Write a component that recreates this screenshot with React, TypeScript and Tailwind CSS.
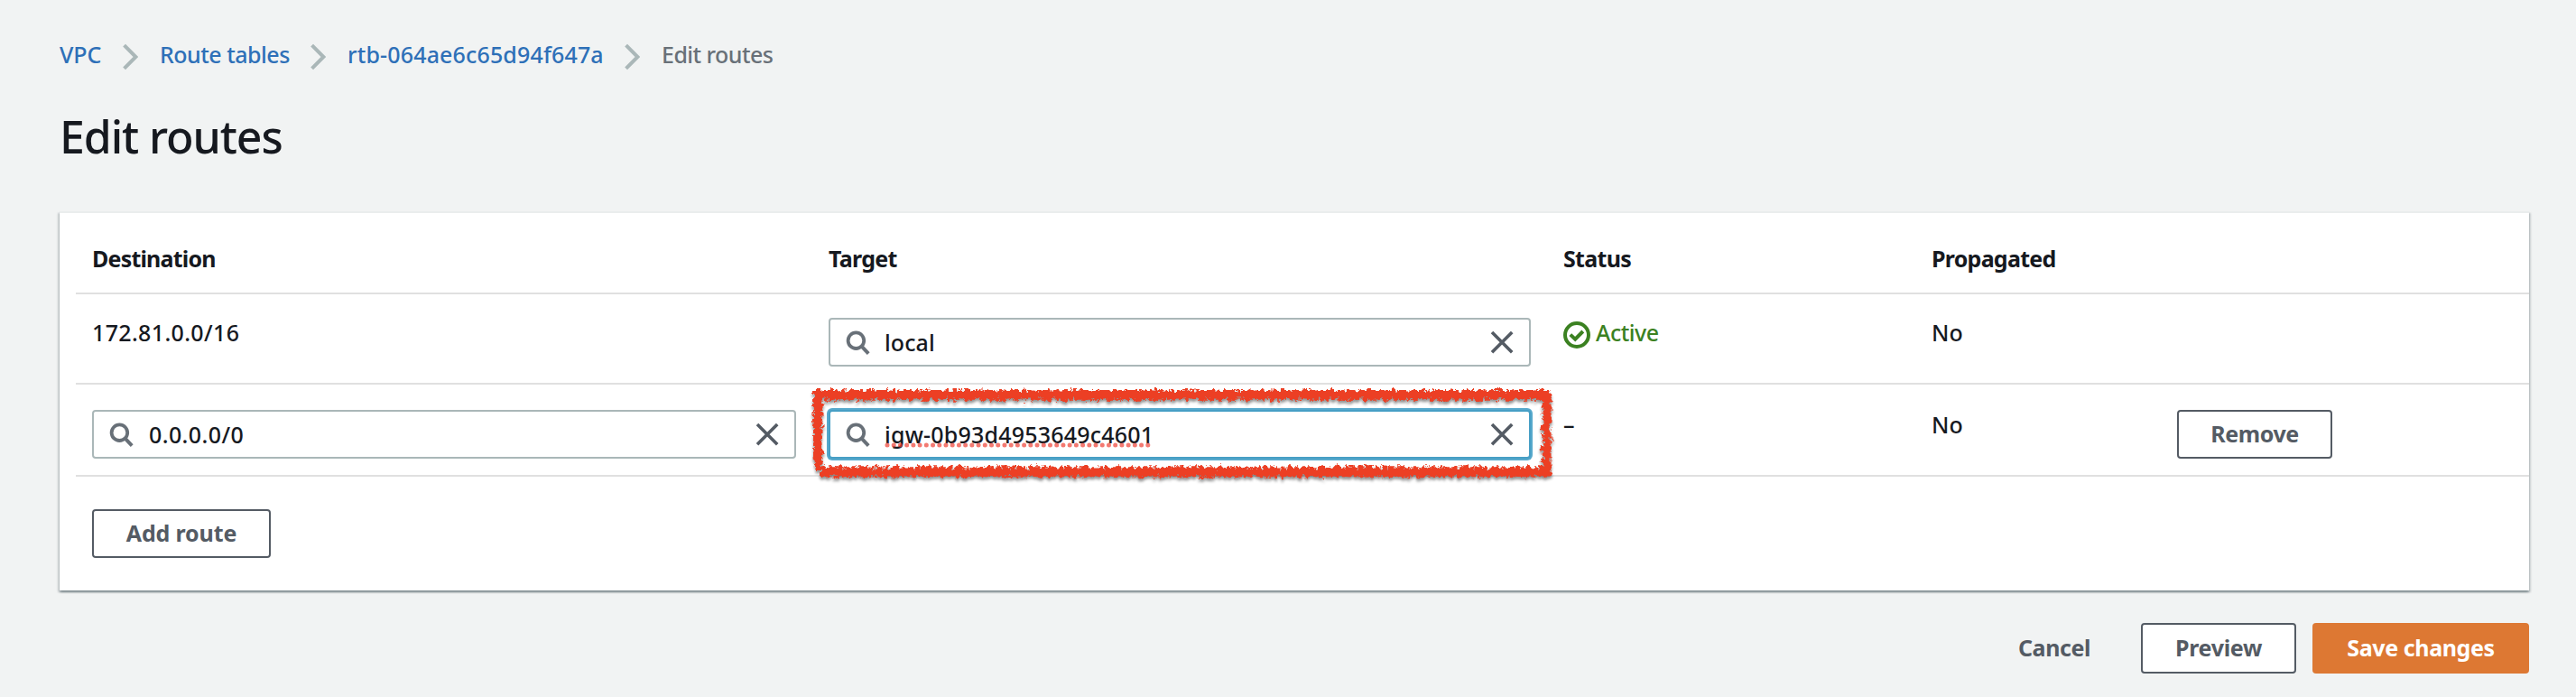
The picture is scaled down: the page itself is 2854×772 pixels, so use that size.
import type { ReactNode } from "react";

function Chevron() {
  return (
    <svg className="mt-2 h-[30px] w-[17px] shrink-0" viewBox="0 0 17 30" fill="none">
      <path d="M1.6 2.2 L14.4 15 L1.6 27.8" stroke="#aab7b8" strokeWidth="4" />
    </svg>
  );
}

function SearchIcon() {
  return (
    <svg className="size-7 shrink-0" viewBox="0 0 28 28" fill="none" stroke="#687078">
      <circle cx="12.4" cy="12.2" r="8.8" strokeWidth="3.8" />
      <path d="M18.6 18.6 L26.2 26.6" strokeWidth="4" />
    </svg>
  );
}

function CloseIcon() {
  return (
    <svg className="size-7 shrink-0" viewBox="0 0 28 28" fill="none">
      <path d="M3 3 L25.2 25.2 M25.2 3 L3 25.2" stroke="#545b64" strokeWidth="3.6" />
    </svg>
  );
}

function SuccessIcon() {
  return (
    <svg className="mt-2 size-[30px] shrink-0" viewBox="0 0 30 30" fill="none" stroke="#3b8121" strokeWidth="4">
      <circle cx="15" cy="15" r="13" />
      <path d="M7.8 14.6 L13.2 19.6 L21.8 11" />
    </svg>
  );
}

function Squiggle() {
  return (
    <svg className="absolute top-[29px] left-0 h-[6px] w-[296px]" viewBox="0 0 296 6">
      <path d="M3 3 H295" stroke="#ee4035" strokeOpacity="0.7" strokeWidth="5" strokeLinecap="round" strokeDasharray="0 7.22" />
    </svg>
  );
}

/* Hand-drawn brush frame around the focused field */
function BrushFrame() {
  return (
    <svg className="pointer-events-none absolute -top-[26px] -left-[21px] h-[112px] w-[830px] max-w-none" viewBox="0 0 830 112" fill="none">
      <defs>
        <filter id="brush" x="0" y="0" width="830" height="112" filterUnits="userSpaceOnUse" colorInterpolationFilters="sRGB">
          <feTurbulence type="fractalNoise" baseFrequency="0.22" numOctaves="3" seed="7" result="edge" />
          <feDisplacementMap in="SourceGraphic" in2="edge" scale="9" xChannelSelector="R" yChannelSelector="G" result="rough" />
          <feDropShadow in="rough" dx="0" dy="3" stdDeviation="1.8" floodColor="#000" floodOpacity="0.42" />
        </filter>
      </defs>
      <g filter="url(#brush)" stroke="#ec3f24">
        <path d="M4 9 H821" strokeWidth="9" />
        <path d="M4 5.5 H821" strokeWidth="3" strokeDasharray="9 3 14 2 5 4 20 2" />
        <path d="M8 14 H812" strokeWidth="3.5" strokeDasharray="6 3 3 2 9 4 4 3" />
        <path d="M8.5 4 V78" strokeWidth="9" />
        <path d="M13 12 V92" strokeWidth="3" strokeDasharray="5 3 8 2 3 3" />
        <path d="M12 95 H821" strokeWidth="9" />
        <path d="M12 90 H816" strokeWidth="3.5" strokeDasharray="5 3 9 4 3 3 6 2" />
        <path d="M12 99 H821" strokeWidth="2.5" strokeDasharray="12 3 7 2 16 4" />
        <path d="M8.5 70 L9 92" strokeWidth="8" />
        <path d="M817.5 4 V99" strokeWidth="8" />
        <path d="M812.5 12 V92" strokeWidth="3.5" strokeDasharray="4 3 7 2 3 4" />
      </g>
    </svg>
  );
}

function Field({ width, focused, children }: { width: string; focused?: boolean; children: ReactNode }) {
  return (
    <div className={`relative ${width}`}>
      <div
        className={`flex h-[54px] items-center rounded-[4px] border-2 bg-white px-4 ${
          focused ? "border-[#479fc5] shadow-[0_0_0_2px_#57a9cc]" : "border-[#aab7b8]"
        }`}
      >
        <SearchIcon />
        {children}
        <CloseIcon />
      </div>
      {focused && <BrushFrame />}
    </div>
  );
}

function Button({ className, children }: { className: string; children: ReactNode }) {
  return (
    <button className={`flex items-center justify-center rounded-[4px] pb-[2px] font-bold ${className}`}>
      {children}
    </button>
  );
}

const columns = "ml-[18px] grid grid-cols-[816px_814px_408px_272px_1fr] border-b-2 border-[#e0e0e0] pl-[18px]";

export default function App() {
  return (
    <div className="h-[772px] w-[2854px] overflow-hidden bg-[#f1f3f3] pt-10 pr-[52px] pl-[66px] font-['Noto_Sans',sans-serif] text-[25px] leading-10 font-medium text-[#16191f]">
      <nav className="flex h-10 text-[#2e70b8]">
        <a className="w-[70px] tracking-[-0.1px]">VPC</a>
        <Chevron />
        <a className="ml-6 w-[167px] tracking-[-0.5px] whitespace-nowrap">Route tables</a>
        <Chevron />
        <a className="ml-6 w-[307px] tracking-[0.15px] whitespace-nowrap">rtb-064ae6c65d94f647a</a>
        <Chevron />
        <span className="ml-6 tracking-[-0.55px] text-[#687078]">Edit routes</span>
      </nav>

      <h1 className="mt-[41px] text-[50px] leading-[60px] tracking-[-1.1px]">Edit routes</h1>

      <section className="mt-[53px] h-[420px] border-t-2 border-[#eaeded] bg-white shadow-[0_2px_2px_0_rgba(0,28,36,0.3),2px_2px_2px_0_rgba(0,28,36,0.15),-2px_2px_2px_0_rgba(0,28,36,0.15)]">
        <div className={`${columns} h-[90px] pt-[30px] font-bold`}>
          <span className="tracking-[-0.8px]">Destination</span>
          <span className="tracking-[-0.7px]">Target</span>
          <span className="tracking-[-0.7px]">Status</span>
          <span className="tracking-[-0.75px]">Propagated</span>
        </div>

        <div className={`${columns} h-[100px] pt-[22px]`}>
          <span className="tracking-[0.35px]">172.81.0.0/16</span>
          <div className="pt-1">
            <Field width="w-[778px]">
              <span className="ml-4 flex-1 pb-[1px] tracking-[0.1px]">local</span>
            </Field>
          </div>
          <div className="flex gap-[6px] tracking-[-0.5px] text-[#3b8121]">
            <SuccessIcon />
            Active
          </div>
          <span>No</span>
        </div>

        <div className={`${columns} h-[102px] pt-6`}>
          <div className="pt-1">
            <Field width="w-[780px]">
              <span className="ml-[17px] flex-1 pb-[1px] tracking-[0.4px]">0.0.0.0/0</span>
            </Field>
          </div>
          <div className="pt-1">
            <Field width="w-[778px]" focused>
              <span className="relative ml-4 flex-1 pb-[1px] tracking-[0.2px]">
                igw-0b93d4953649c4601
                <Squiggle />
              </span>
            </Field>
          </div>
          <span>–</span>
          <span>No</span>
          <div className="pt-1">
            <Button className="h-[54px] w-[172px] border-2 border-[#545b64] bg-white tracking-[-0.4px] text-[#545b64]">Remove</Button>
          </div>
        </div>

        <div className="pt-9 pl-9">
          <Button className="h-[54px] w-[198px] border-2 border-[#545b64] bg-white tracking-[-0.15px] text-[#545b64]">Add route</Button>
        </div>
      </section>

      <footer className="mt-9 flex justify-end">
        <Button className="mr-[18px] h-14 w-[156px] tracking-[-0.4px] text-[#545b64]">Cancel</Button>
        <Button className="mr-[18px] h-14 w-[172px] border-2 border-[#545b64] bg-white tracking-[-0.3px] text-[#545b64]">Preview</Button>
        <Button className="h-14 w-[240px] bg-[#dd7833] tracking-[-0.4px] text-white">Save changes</Button>
      </footer>
    </div>
  );
}
